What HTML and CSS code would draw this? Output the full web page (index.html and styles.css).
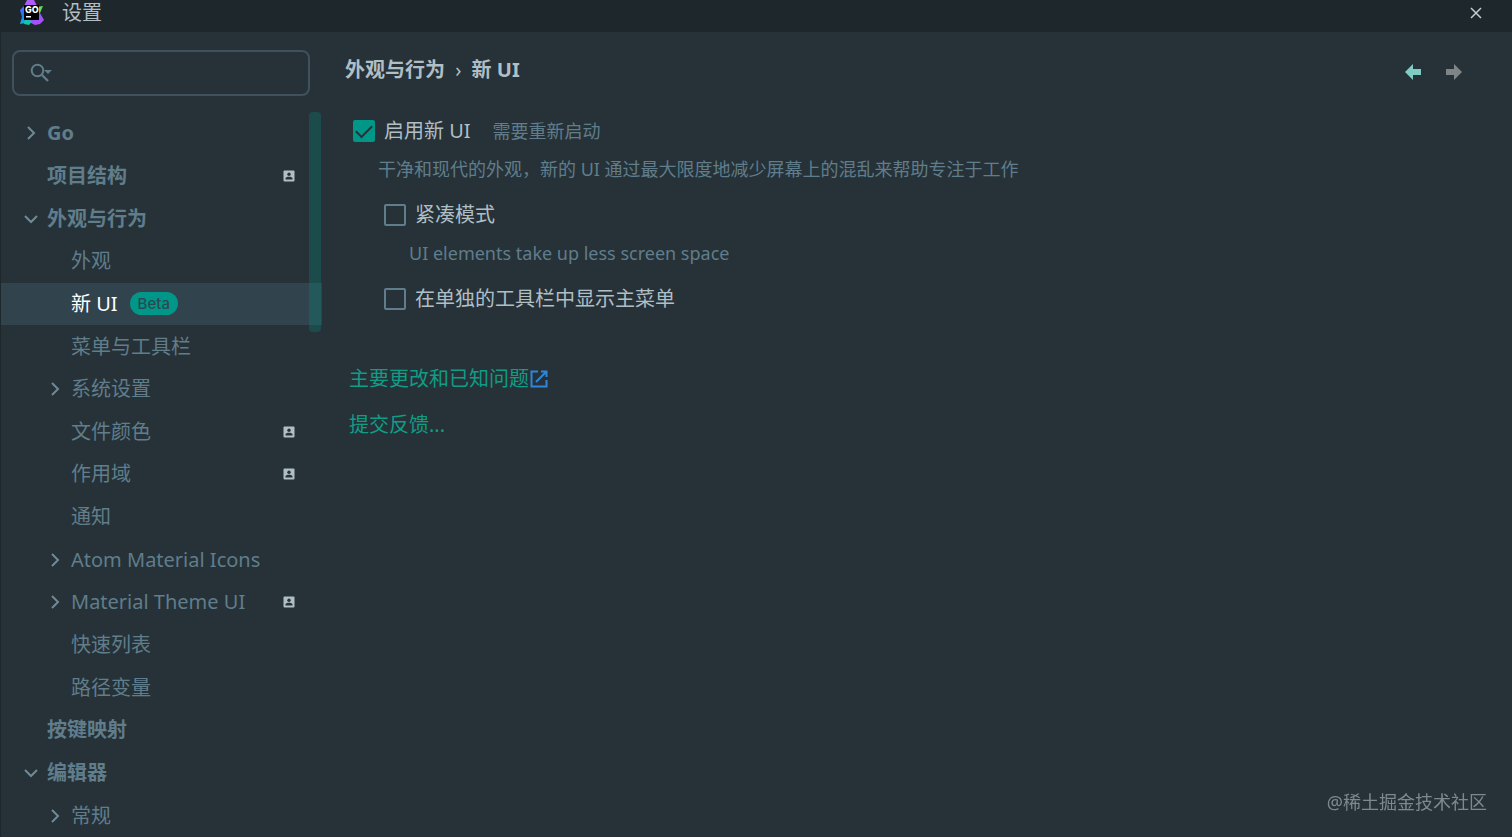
FILE: index.html
```html
<!DOCTYPE html>
<html lang="zh-CN">
<head>
  <meta charset="UTF-8" />
  <meta name="viewport" content="width=device-width, initial-scale=1.0" />
  <title>设置</title>
  <link rel="stylesheet" href="styles.css">
</head>
<body>
  <!-- shared icons -->
  <svg class="sprite" aria-hidden="true">
    <symbol id="chevron" viewBox="0 0 16 16"><path d="M5 2l6 6-6 6" fill="none" stroke="currentColor" stroke-width="2"/></symbol>
    <symbol id="project" viewBox="0 0 12 12">
      <rect x="0.5" y="0.5" width="11" height="11" rx="1" fill="#b0bec5"/>
      <circle cx="6" cy="4.2" r="1.7" fill="#263238"/>
      <path d="M2.5 9.5V8.6C2.5 7.4 4.2 6.8 6 6.8s3.5.6 3.5 1.8v.9z" fill="#263238"/>
    </symbol>
  </svg>

  <header class="titlebar">
    <svg class="logo" viewBox="0 0 26 26">
      <defs>
        <linearGradient id="logoBlue" x1="0" y1="0" x2="0.3" y2="1">
          <stop offset="0" stop-color="#7b5cff"/>
          <stop offset="0.5" stop-color="#1a7cfa"/>
          <stop offset="1" stop-color="#12b5d8"/>
        </linearGradient>
        <linearGradient id="logoPurple" x1="0" y1="0" x2="0.6" y2="1">
          <stop offset="0" stop-color="#5b6cff"/>
          <stop offset="1" stop-color="#b74af7"/>
        </linearGradient>
      </defs>
      <path d="M2 10l5-5 6 3 2 14-6 2-2-1-5 1 2-7z" fill="url(#logoBlue)"/>
      <path d="M9 0h7l3 6-4 4-9-4z" fill="#b05af7"/>
      <path d="M18 7l7-1-3 7-4 1z" fill="#5be05a"/>
      <path d="M18 12l4 1 4 7-4 4-5 1-6-3z" fill="url(#logoPurple)"/>
      <path d="M7 20l7 1-3 4-5-1z" fill="#12c99b"/>
      <rect x="6" y="5" width="15" height="15" fill="#000"/>
      <text class="logo-text" x="7" y="13">GO</text>
      <rect x="8" y="16" width="5" height="1.5" fill="#fff"/>
    </svg>
    <h1>设置</h1>
    <button class="close-btn" aria-label="关闭">
      <svg viewBox="0 0 12 12"><path d="M1 1l10 10M11 1L1 11" stroke="currentColor" stroke-width="1.5"/></svg>
    </button>
  </header>

  <div class="settings">
    <aside class="sidebar">
      <label class="search">
        <svg viewBox="0 0 22 20">
          <circle cx="7.5" cy="7.5" r="5.8" fill="none" stroke="currentColor" stroke-width="2"/>
          <path d="M12 12l6 6" stroke="currentColor" stroke-width="2.4"/>
          <path d="M14 7h8l-4 4z" fill="currentColor"/>
        </svg>
        <input type="text" aria-label="搜索" />
      </label>

      <nav class="tree-wrap">
        <ul class="tree">
          <li class="top"><svg class="chevron"><use href="#chevron"/></svg><a href="#">Go</a></li>
          <li class="top"><a href="#">项目结构</a><svg class="project"><use href="#project"/></svg></li>
          <li class="top open"><svg class="chevron"><use href="#chevron"/></svg><a href="#">外观与行为</a></li>
          <li class="child"><a href="#">外观</a></li>
          <li class="child selected"><a href="#">新 UI</a><span class="badge">Beta</span></li>
          <li class="child"><a href="#">菜单与工具栏</a></li>
          <li class="child"><svg class="chevron"><use href="#chevron"/></svg><a href="#">系统设置</a></li>
          <li class="child"><a href="#">文件颜色</a><svg class="project"><use href="#project"/></svg></li>
          <li class="child"><a href="#">作用域</a><svg class="project"><use href="#project"/></svg></li>
          <li class="child"><a href="#">通知</a></li>
          <li class="child"><svg class="chevron"><use href="#chevron"/></svg><a href="#">Atom Material Icons</a></li>
          <li class="child"><svg class="chevron"><use href="#chevron"/></svg><a href="#">Material Theme UI</a><svg class="project"><use href="#project"/></svg></li>
          <li class="child"><a href="#">快速列表</a></li>
          <li class="child"><a href="#">路径变量</a></li>
          <li class="top"><a href="#">按键映射</a></li>
          <li class="top open"><svg class="chevron"><use href="#chevron"/></svg><a href="#">编辑器</a></li>
          <li class="child"><svg class="chevron"><use href="#chevron"/></svg><a href="#">常规</a></li>
        </ul>
        <div class="scroll-thumb"></div>
      </nav>
    </aside>

    <main class="content">
      <div class="content-header">
        <h2>外观与行为 <span class="sep">›</span> 新 UI</h2>
        <div class="history">
          <button class="back-btn" aria-label="后退"><svg viewBox="0 0 16 16"><path d="M0 8l8-8v5h8v6H8v5z" fill="currentColor"/></svg></button>
          <button class="forward-btn" aria-label="前进"><svg viewBox="0 0 16 16"><path d="M16 8L8 0v5H0v6h8v5z" fill="currentColor"/></svg></button>
        </div>
      </div>

      <form class="options">
        <div class="option">
          <input type="checkbox" id="newUi" checked />
          <label for="newUi">启用新 UI</label>
          <span class="restart">需要重新启动</span>
        </div>
        <p class="hint">干净和现代的外观，新的 UI 通过最大限度地减少屏幕上的混乱来帮助专注于工作</p>
        <div class="sub-options">
          <div class="option">
            <input type="checkbox" id="compact" />
            <label for="compact">紧凑模式</label>
          </div>
          <p class="hint">UI elements take up less screen space</p>
          <div class="option">
            <input type="checkbox" id="mainMenu" />
            <label for="mainMenu">在单独的工具栏中显示主菜单</label>
          </div>
        </div>
      </form>

      <div class="links">
        <a href="#">主要更改和已知问题<svg viewBox="0 0 18 18"><path d="M8 1.5H1.5v15h15V10M11 1.5h5.5V7M16 2L6 12" fill="none" stroke="#2f86dd" stroke-width="2"/></svg></a>
        <a href="#">提交反馈...</a>
      </div>
    </main>
  </div>

  <div class="watermark">@稀土掘金技术社区</div>
</body>
</html>
```
FILE: styles.css
```css
* { box-sizing: border-box; }
body { margin: 0; height: 100vh; display: flex; flex-direction: column; overflow: hidden; background: #263238; color: #b0bec5; font-family: "Noto Sans", "Noto Sans CJK SC", sans-serif; font-size: 20px; line-height: 28px; }
h1, h2, p, ul { margin: 0; padding: 0; }
a { color: inherit; text-decoration: none; }
button { padding: 0; border: none; background: none; cursor: pointer; }
svg { display: block; flex: none; }
.sprite { position: absolute; width: 0; height: 0; }

.titlebar { display: flex; align-items: center; height: 32px; padding: 0 30px 6px 18px; background: #1e272c; }
.titlebar h1 { margin-left: 18px; font-size: 20px; font-weight: normal; }
.logo { width: 26px; height: 26px; }
.logo-text { font-family: Inter, sans-serif; font-size: 9px; font-weight: 800; fill: #fff; }
.close-btn { margin-left: auto; color: #c3ccd0; }
.close-btn svg { width: 12px; height: 12px; }

.settings { flex: 1; display: flex; min-height: 0; }
.sidebar { display: flex; flex-direction: column; width: 322px; border-left: 1px solid #1e272c; }
.search { display: flex; align-items: center; height: 46px; margin: 18px 12px 16px 11px; padding-left: 16px; border: 2px solid #3f525b; border-radius: 8px; color: #607d8b; }
.search svg { width: 22px; height: 20px; }
.search input { flex: 1; min-width: 0; height: 40px; margin: 0 8px; border: none; outline: none; background: none; color: #b0bec5; font: inherit; }

.tree-wrap { position: relative; flex: 1; display: flex; min-height: 0; }
.tree { flex: 1; display: grid; grid-auto-rows: 1fr; list-style: none; color: #607d8b; }
.tree li { display: flex; align-items: center; padding-right: 27px; }
.tree .top { padding-left: 46px; font-weight: bold; }
.tree .child { padding-left: 70px; }
.tree .selected { background: #31444d; color: #fff; }
.tree .chevron { width: 16px; height: 16px; margin-left: -24px; margin-right: 8px; color: #708a96; }
.tree .open .chevron { transform: rotate(90deg); }
.tree .project { width: 12px; height: 12px; margin-left: auto; }
.badge { height: 23px; margin-left: 12px; padding: 0 8px; border-radius: 12px; background: #009688; color: #2a4a52; font-family: Inter, sans-serif; font-size: 15px; font-weight: 500; line-height: 23px; }
.scroll-thumb { position: absolute; top: 0; right: 1px; width: 12px; height: 220px; border-radius: 4px; background: rgba(0, 150, 136, 0.25); }

.content { flex: 1; padding: 18px 50px 0 23px; }
.content-header { display: flex; align-items: center; justify-content: space-between; height: 40px; margin-bottom: 23px; }
.content-header h2 { font-size: 20px; font-weight: bold; }
.sep { margin: 0 5px; font-weight: normal; }
.history { display: flex; gap: 25px; padding-top: 4px; }
.history svg { width: 16px; height: 16px; }
.back-btn { color: #80cbc4; }
.forward-btn { color: #7f8487; }

.options { padding-left: 8px; }
.option { display: flex; align-items: center; height: 36px; }
.option input { appearance: none; display: grid; place-items: center; width: 22px; height: 22px; margin: 0 9px 0 0; border: 2px solid #607d8b; border-radius: 2px; }
.option input:checked { border-color: #009688; background: #009688; }
.option input:checked::after { content: ""; width: 14px; height: 7px; border-left: 2px solid #263238; border-bottom: 2px solid #263238; transform: translateY(-2px) rotate(-45deg); }
.restart { margin-left: 22px; color: #607d8b; font-size: 18px; }
.hint { height: 40px; margin-bottom: 8px; padding-left: 25px; color: #607d8b; font-size: 18px; line-height: 40px; }
.sub-options { padding-left: 31px; }

.links { display: flex; flex-direction: column; align-items: flex-start; gap: 10px; margin-top: 44px; padding-left: 4px; color: #0f9d86; }
.links a { display: flex; align-items: center; height: 36px; }
.links svg { width: 18px; height: 18px; margin-left: 1px; }

.watermark { position: fixed; right: 25px; bottom: 21px; color: #7f898d; font-size: 18px; }
```
